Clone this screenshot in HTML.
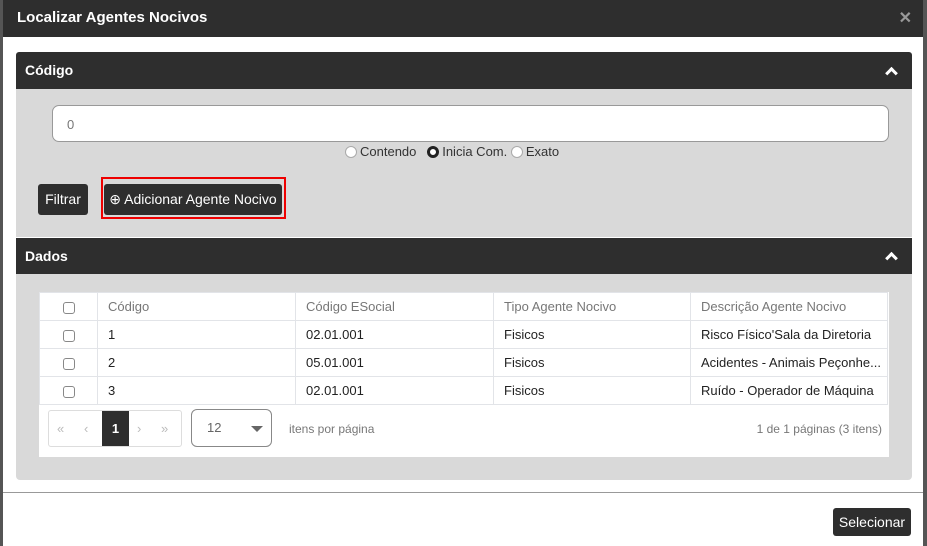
<!DOCTYPE html><html><head><style>
*{box-sizing:border-box;margin:0;padding:0}
body{width:927px;height:546px;background:#555;font-family:"Liberation Sans",Arial,sans-serif;position:relative;overflow:hidden}
.modal{position:absolute;left:3px;top:0;width:920px;height:546px;background:#fff}
.mh{height:37px;background:#2e2e2e;color:#fff;font-weight:bold;font-size:15px;padding:9px 14px}
.x{position:absolute;right:11px;top:8px;color:#999;font-size:16px;font-weight:bold}
.ph{position:absolute;left:13px;width:896px;background:#2e2e2e;color:#fff;font-weight:bold;font-size:14px;padding:0 9px;border-radius:3px 3px 0 0}
.pb{position:absolute;left:13px;width:896px;background:#d9d9d9}
.chev{position:absolute;right:16px;top:50%;width:9px;height:9px;border-left:3px solid #fff;border-top:3px solid #fff;transform:translateY(-25%) rotate(45deg)}
.btn{position:absolute;background:#2e2e2e;color:#fff;font-size:14px;border-radius:3px;text-align:center;white-space:nowrap}
table{border-collapse:collapse;width:849px;font-size:13px;color:#222;table-layout:fixed}
td,th{border:1px solid #e2e4e8;height:28px;padding:0 10px;white-space:nowrap;overflow:hidden}
th{text-align:left;font-weight:normal;color:#777}
.cb{display:inline-block;width:12px;height:12px;border:1px solid #888;border-radius:3px;vertical-align:middle}
.rad{display:inline-block;width:12px;height:12px;border:1px solid #aaa;border-radius:50%;background:#fff;vertical-align:-2px;margin-right:3px}
</style></head><body>
<div class="modal">
<div class="mh">Localizar Agentes Nocivos</div><div class="x">✕</div>
<div class="ph" style="top:52px;height:37px;line-height:37px">Código<div class="chev"></div></div>
<div class="pb" style="top:89px;height:148px">
 <div style="position:absolute;left:36px;top:16px;width:837px;height:37px;background:#fff;border:1px solid #999;border-radius:7px;padding:11px 14px;font-size:13px;color:#777">0</div>
 <div style="position:absolute;left:329px;top:55px;font-size:13px;color:#333;white-space:nowrap"><span class="rad"></span>Contendo &nbsp; <span class="rad" style="border:3px solid #222"></span>Inicia Com. <span class="rad"></span>Exato</div>
 <div class="btn" style="left:22px;top:95px;width:50px;height:31px;line-height:31px">Filtrar</div>
 <div style="position:absolute;left:85px;top:88px;width:185px;height:42px;border:2px solid #e00"></div>
 <div class="btn" style="left:88px;top:95px;width:178px;height:31px;line-height:31px">⊕ Adicionar Agente Nocivo</div>
</div>
<div class="ph" style="top:238px;height:36px;line-height:36px;border-radius:0">Dados<div class="chev"></div></div>
<div class="pb" style="top:274px;height:206px;border-radius:0 0 4px 4px">
 <div style="position:absolute;left:23px;top:18px;width:850px;height:165px;background:#fff">
 <table>
 <colgroup><col style="width:58px"><col style="width:198px"><col style="width:198px"><col style="width:197px"><col></colgroup>
 <tr><th style="text-align:center"><span class="cb"></span></th><th>Código</th><th>Código ESocial</th><th>Tipo Agente Nocivo</th><th>Descrição Agente Nocivo</th></tr>
 <tr><td style="text-align:center"><span class="cb"></span></td><td>1</td><td>02.01.001</td><td>Fisicos</td><td>Risco Físico'Sala da Diretoria</td></tr>
 <tr><td style="text-align:center"><span class="cb"></span></td><td>2</td><td>05.01.001</td><td>Fisicos</td><td>Acidentes - Animais Peçonhe...</td></tr>
 <tr><td style="text-align:center"><span class="cb"></span></td><td>3</td><td>02.01.001</td><td>Fisicos</td><td>Ruído - Operador de Máquina</td></tr>
 </table>
 <div style="position:absolute;left:9px;top:118px;width:134px;height:37px;border:1px solid #ddd;border-radius:3px;font-size:13px;color:#bbb">
  <span style="position:absolute;left:8px;top:10px">«</span><span style="position:absolute;left:35px;top:10px">‹</span>
  <span style="position:absolute;left:53px;top:0;width:27px;height:35px;background:#2e2e2e;color:#fff;font-weight:bold;text-align:center;line-height:35px">1</span>
  <span style="position:absolute;left:88px;top:10px">›</span><span style="position:absolute;left:112px;top:10px">»</span></div>
 <div style="position:absolute;left:152px;top:117px;width:81px;height:38px;border:1px solid #888;border-radius:6px;font-size:13px;color:#666;padding:10px 15px">12<span style="position:absolute;right:8px;top:16px;border:6px solid transparent;border-top:6px solid #666;border-bottom:0"></span></div>
 <div style="position:absolute;left:250px;top:130px;font-size:12px;color:#777">itens por página</div>
 <div style="position:absolute;right:7px;top:130px;font-size:12px;color:#777">1 de 1 páginas (3 itens)</div>
 </div>
</div>
<div style="position:absolute;left:0;top:492px;width:920px;height:1px;background:#999"></div>
<div class="btn" style="left:830px;top:508px;width:78px;height:28px;line-height:28px">Selecionar</div>
</div>
</body></html>
